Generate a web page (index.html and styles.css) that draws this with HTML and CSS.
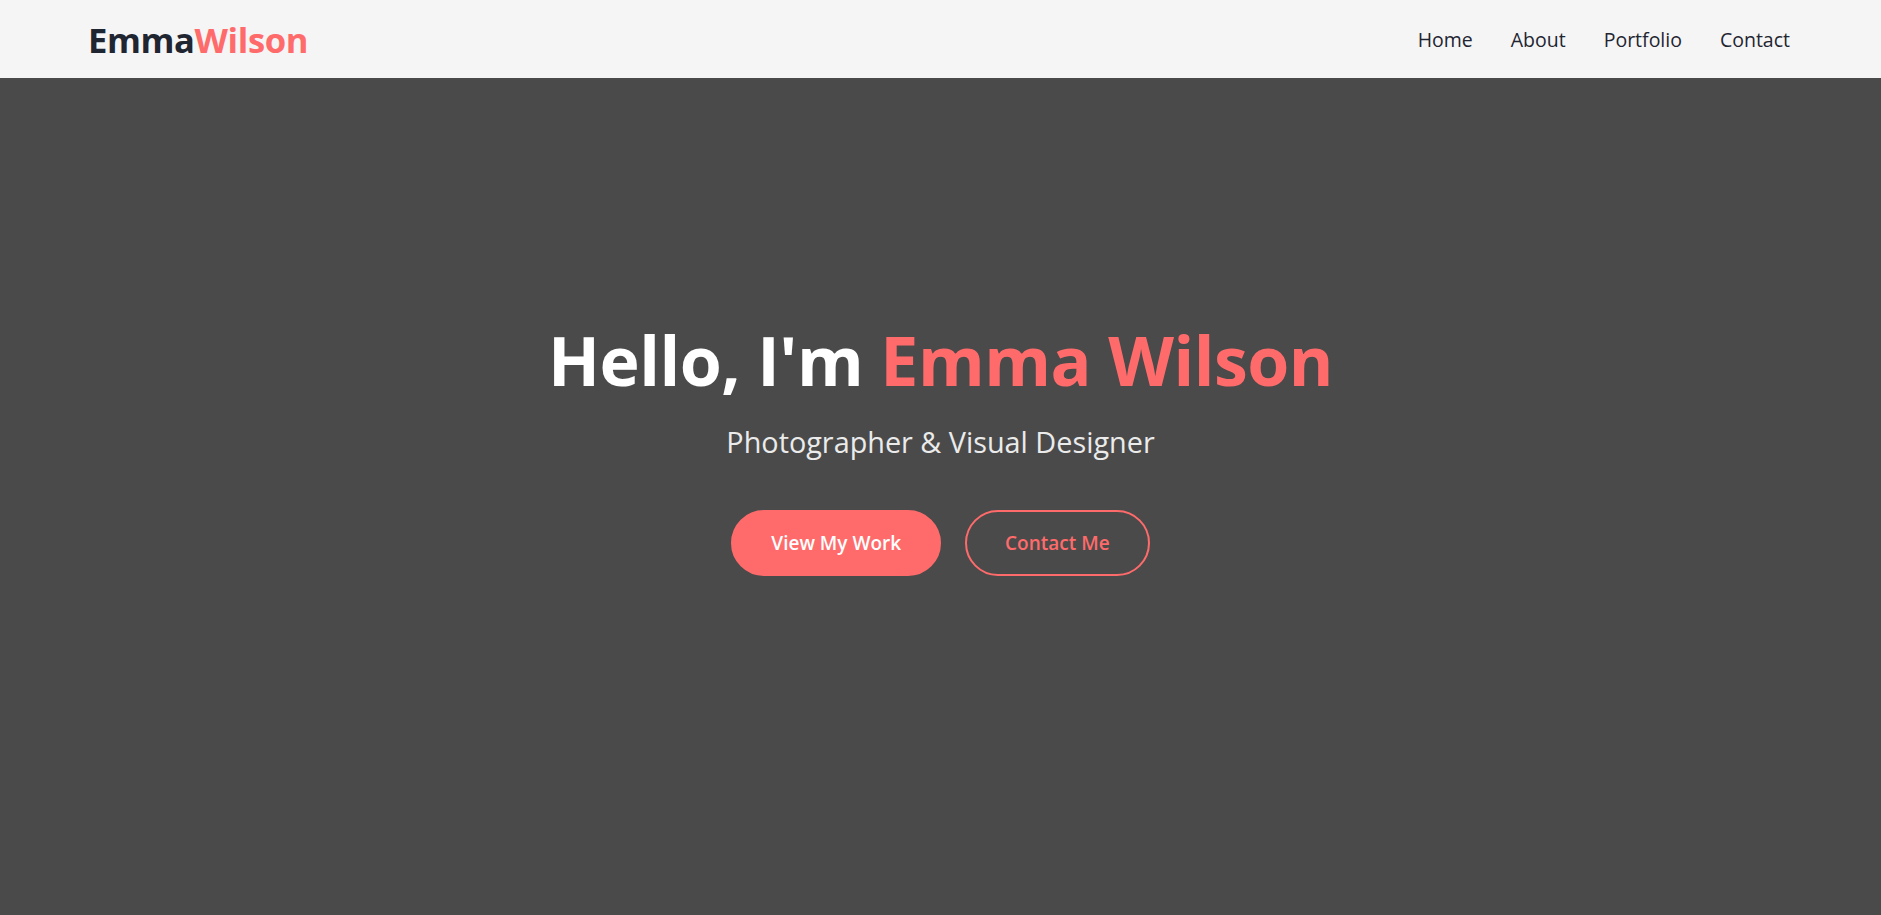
FILE: index.html
```html
<!DOCTYPE html>
<html lang="en">
<head>
<meta charset="utf-8">
<title>Emma Wilson</title>
<link rel="stylesheet" href="styles.css">
</head>
<body>
<header class="site-header">
  <a class="logo" href="#">Emma<span class="accent">Wilson</span></a>
  <nav class="nav">
    <a href="#">Home</a>
    <a href="#">About</a>
    <a href="#">Portfolio</a>
    <a href="#">Contact</a>
  </nav>
</header>
<section class="hero">
  <h1 class="hero-title">Hello, I'm <span class="accent">Emma Wilson</span></h1>
  <p class="hero-sub">Photographer &amp; Visual Designer</p>
  <div class="hero-actions">
    <a class="btn btn-primary" href="#">View My Work</a>
    <a class="btn btn-outline" href="#">Contact Me</a>
  </div>
</section>
</body>
</html>
```
FILE: styles.css
```css
* { box-sizing: border-box; }
html, body { margin: 0; padding: 0; }
body {
  font-family: "Open Sans", "Noto Sans", "DejaVu Sans", sans-serif;
  background: #4a4a4a;
  color: #1f2531;
}
a { text-decoration: none; color: inherit; }
.accent { color: #ff6b6b; }

.site-header {
  position: fixed;
  top: 0; left: 0; right: 0;
  height: 78px;
  background: #f5f5f5;
  display: flex;
  align-items: center;
  justify-content: space-between;
  padding: 0 91px 0 88px;
  z-index: 10;
}
.logo {
  font-size: 34.6px;
  font-weight: 700;
  color: #1f2531;
  letter-spacing: -0.4px;
}
.nav {
  display: flex;
  gap: 38px;
}
.nav a {
  font-size: 19.5px;
  font-weight: 500;
  color: #1f2531;
}

.hero {
  height: 100vh;
  display: flex;
  flex-direction: column;
  align-items: center;
  justify-content: center;
  text-align: center;
  background: #4a4a4a;
  padding-bottom: 20px;
}
.hero-title {
  margin: 0;
  font-size: 68px;
  line-height: 1.2;
  font-weight: 700;
  color: #ffffff;
  letter-spacing: -0.5px;
}
.hero-sub {
  margin: 19px 0 47px;
  font-size: 28.8px;
  line-height: 1.5;
  color: #ebebeb;
}
.hero-actions {
  display: flex;
  gap: 24px;
}
.btn {
  display: inline-block;
  padding: 16px 38px;
  border: 2px solid #ff6b6b;
  border-radius: 50px;
  font-size: 19px;
  font-weight: 600;
  line-height: 30px;
}
.btn-primary {
  background: #ff6b6b;
  color: #ffffff;
}
.btn-outline {
  background: transparent;
  color: #ff6b6b;
}
```
